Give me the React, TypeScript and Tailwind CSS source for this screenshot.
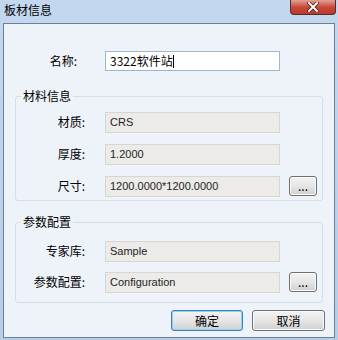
const cjk = { fontFamily: '"Noto Sans CJK SC", "Liberation Sans", sans-serif' };
const latin = { fontFamily: '"Liberation Sans", "Noto Sans CJK SC", sans-serif' };

function Field({ value, white = false }: { value: string; white?: boolean }) {
  return (
    <div
      className={
        "w-[175px] h-[21px] flex items-center pl-[4px] text-[11px] text-[#1e1e1e] border " +
        (white ? "bg-white border-[#a3b5cb]" : "bg-[#ecebe8] border-[#d6d6d4]")
      }
      style={latin}
    >
      {value}
    </div>
  );
}

function Btn({ label, focus = false, w = "w-[72px]", h = "h-[21px]" }: { label: string; focus?: boolean; w?: string; h?: string }) {
  return (
    <div
      className={
        w + " " + h +
        " rounded-[3px] border flex items-center justify-center text-[12px] text-black bg-gradient-to-b from-[#f3f3f3] via-[#e6e6e6] to-[#d0d0d0] " +
        (focus ? "border-[#3c7fb1] shadow-[inset_0_0_0_1px_#8fd4f5]" : "border-[#707070] shadow-[inset_0_0_0_1px_#fbfbfb]")
      }
      style={cjk}
    >
      {label}
    </div>
  );
}

function Row({ label, value, more = false }: { label: string; value: string; more?: boolean }) {
  return (
    <div className="flex items-center h-[22px]">
      <div className="w-[69px] text-right text-[12px] text-black" style={cjk}>
        {label}
      </div>
      <div className="ml-[20px]">
        <Field value={value} />
      </div>
      {more && (
        <div className="ml-[9px]">
          <Btn label="..." w="w-[28px]" h="h-[20px]" />
        </div>
      )}
    </div>
  );
}

export default function App() {
  return (
    <div className="w-[338px] h-[340px] flex flex-col bg-gradient-to-b from-[#c3d8ef] to-[#b6cde7] overflow-hidden">
      <div className="h-[23px] flex items-start justify-between shrink-0">
        <span className="ml-[4px] mt-[2px] text-[12px] leading-[16px] text-black" style={cjk}>
          板材信息
        </span>
        <div className="mr-[2px] w-[46px] h-[15px] rounded-b-[4px] border border-t-0 border-[#5a2a26] bg-gradient-to-b from-[#e2a196] via-[#c9483a] to-[#b73a2c] flex items-center justify-center">
          <svg width="12" height="10" viewBox="0 0 12 10">
            <path d="M2 1 L10 9 M10 1 L2 9" stroke="#3a1a16" strokeWidth="3.4" strokeLinecap="square" />
            <path d="M2 1 L10 9 M10 1 L2 9" stroke="#ffffff" strokeWidth="2" strokeLinecap="square" />
          </svg>
        </div>
      </div>
      <div className="mx-[3px] mb-[2px] flex-1 border border-[#6a7f98] bg-[#eef3fa] flex flex-col">
        <div className="flex items-center h-[20px] mt-[27px]">
          <div className="w-[73px] text-right text-[12px] text-black" style={cjk}>
            名称:
          </div>
          <div className="ml-[28px]">
            <div className="w-[175px] h-[20px] flex items-center pl-[4px] bg-white border border-[#a3b5cb] text-[12px] text-black" style={cjk}>
              3322软件站<span className="w-px h-[13px] bg-black" />
            </div>
          </div>
        </div>

        <fieldset className="mx-[11px] mt-[18px] border border-[#d5dde6] rounded-[3px] h-[112px] flex flex-col">
          <legend className="ml-[5px] px-[2px] text-[12px] leading-[14px] text-black" style={cjk}>
            材料信息
          </legend>
          <div className="flex flex-col gap-[10px] mt-[8px]">
            <Row label="材质:" value="CRS" />
            <Row label="厚度:" value="1.2000" />
            <Row label="尺寸:" value="1200.0000*1200.0000" more />
          </div>
        </fieldset>

        <fieldset className="mx-[11px] mt-[14px] border border-[#d5dde6] rounded-[3px] h-[88px] flex flex-col">
          <legend className="ml-[5px] px-[2px] text-[12px] leading-[14px] text-black" style={cjk}>
            参数配置
          </legend>
          <div className="flex flex-col gap-[9px] mt-[11px]">
            <Row label="专家库:" value="Sample" />
            <Row label="参数配置:" value="Configuration" more />
          </div>
        </fieldset>

        <div className="flex justify-end gap-[9px] mr-[9px] mt-[7px]">
          <Btn label="确定" focus />
          <Btn label="取消" w="w-[73px]" />
        </div>
      </div>
    </div>
  );
}
